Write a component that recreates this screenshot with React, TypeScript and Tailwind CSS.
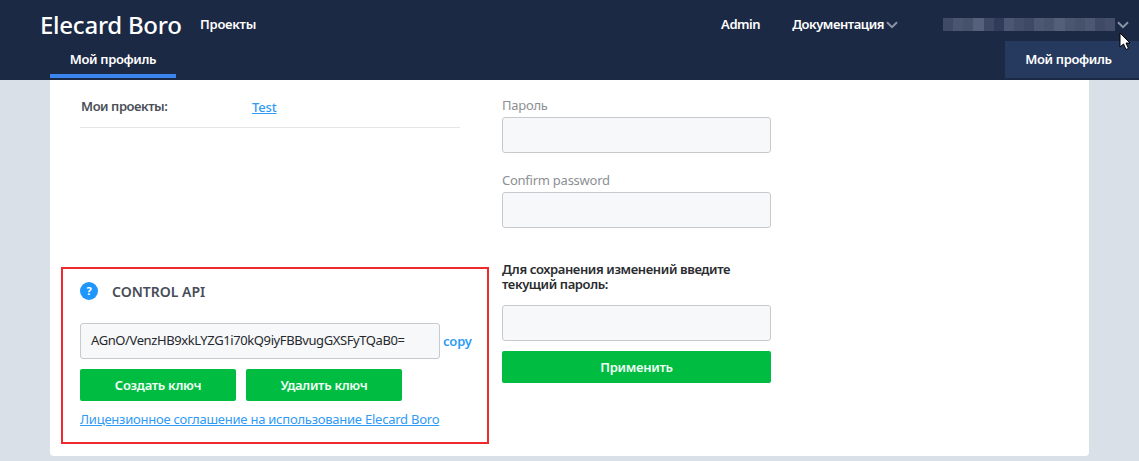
import React from "react";

const blur = ["#3f4a66","#4a5570","#46516c","#55607a","#3d4864","#2f3b59","#4b5672","#434e6a","#3e4965","#4c5772","#48536e","#535e78","#4a5570","#46516c","#4c5772","#3f4a66","#454f6b"];

function Chevron({ className }: { className: string }) {
  return (
    <svg viewBox="0 0 12 8" className={className} fill="none" stroke="currentColor" strokeWidth="2">
      <path d="M1 1.2 L6 6.2 L11 1.2" />
    </svg>
  );
}

function Field({ label, mt }: { label: string; mt: string }) {
  return (
    <div className={mt}>
      <div className="h-[22px] text-[13px] leading-[20px] tracking-[-0.25px] text-[#8c8f94]">{label}</div>
      <div className="h-[36px] w-[269px] rounded-[3px] border border-[#c8c9cc] bg-[#f7f8fa]" />
    </div>
  );
}

function GreenButton({ label, w }: { label: string; w: string }) {
  return (
    <div className={`${w} flex h-[32px] items-center justify-center rounded-[2px] bg-[#00bd41] pt-[1px] text-[13px] font-semibold tracking-[-0.3px] text-[#f2fff6]`}>
      {label}
    </div>
  );
}

export default function App() {
  return (
    <div className="relative h-[461px] w-[1139px] overflow-hidden bg-[#d9e0e8] font-['Noto_Sans',sans-serif]">
      <header className="h-[80px] bg-[#1c2945] text-white">
        <div className="flex h-[49px] items-center pl-[40px] pr-[10px]">
          <div className="w-[160px] text-[24px] font-medium leading-[32px] tracking-[-0.25px]">Elecard Boro</div>
          <div className="text-[13px] font-semibold tracking-[-0.25px]">Проекты</div>
          <div className="ml-auto flex items-center text-[13px] font-semibold tracking-[-0.45px]">
            <span>Admin</span>
            <span className="ml-[32px]">Документация</span>
            <Chevron className="ml-[2px] h-[8px] w-[12px] text-[#8a93a8]" />
            <div className="ml-[45px] flex h-[13px] w-[172px]">
              {blur.map((c, i) => (
                <div key={i} className="h-full flex-1" style={{ backgroundColor: c }} />
              ))}
            </div>
            <Chevron className="ml-[2px] h-[8px] w-[12px] text-[#8a93a8]" />
          </div>
        </div>
        <div className="ml-[50px] flex h-[29px] w-[126px] items-start justify-center border-b-4 border-[#3b86ee] pt-[1px] text-[13px] font-semibold tracking-[-0.35px]">
          Мой профиль
        </div>
      </header>

      <div className="absolute left-[1005px] top-[41px] flex h-[37px] w-[134px] items-center justify-center bg-[#263a60] pr-[7px] text-[13px] font-semibold tracking-[-0.35px] text-white">
        Мой профиль
      </div>
      <svg className="absolute left-[1119px] top-[32px]" width="12" height="19" viewBox="0 0 12 19">
        <path d="M1 1 L1 15 L4.5 12 L7 17.5 L9.5 16.4 L7 11 L11 11 Z" fill="#fff" stroke="#000" strokeWidth="1" />
      </svg>

      <main className="mx-[50px] flex h-[376px] rounded-b-[4px] bg-white">
        <div className="w-[452px] shrink-0">
          <div className="ml-[30px] flex h-[48px] w-[380px] border-b border-[#e4e5e7] pt-[17px]">
            <div className="w-[172px] pl-[1px] text-[13px] font-semibold leading-[18px] tracking-[-0.45px] text-[#4b4f58]">Мои проекты:</div>
            <a className="text-[13px] font-medium leading-[20px] tracking-[-0.15px] text-[#2f9bf5] underline">Test</a>
          </div>
          <section className="ml-[11px] mt-[139px] h-[177px] w-[428px] border-2 border-[#ee2a2e] pl-[17px] pt-[10px]">
            <div className="flex h-[24px] items-center">
              <div className="flex h-[18px] w-[18px] items-center justify-center rounded-full bg-[#1e96fb] text-[11px] font-bold text-white">?</div>
              <div className="ml-[14px] text-[14px] font-semibold text-[#474c59]">CONTROL API</div>
            </div>
            <div className="mt-[20px] flex items-center">
              <div className="flex h-[36px] w-[360px] items-center rounded-[3px] border border-[#c8c9cc] bg-[#f7f8fa] pl-[10px] text-[13px] tracking-[-0.4px] text-[#26282c]">
                AGnO/VenzHB9xkLYZG1i70kQ9iyFBBvugGXSFyTQaB0=
              </div>
              <a className="ml-[3px] text-[13px] font-semibold leading-[16px] tracking-[-0.2px] text-[#2f9bf5]">copy</a>
            </div>
            <div className="mt-[10px] flex gap-[10px]">
              <GreenButton label="Создать ключ" w="w-[156px]" />
              <GreenButton label="Удалить ключ" w="w-[156px]" />
            </div>
            <a className="mt-[9px] block w-[360px] whitespace-nowrap text-[13px] leading-[18px] tracking-[-0.24px] text-[#2f9bf5] underline">
              Лицензионное соглашение на использование Elecard Boro
            </a>
          </section>
        </div>
        <div className="pt-[15px]">
          <Field label="Пароль" mt="mt-0" />
          <Field label="Confirm password" mt="mt-[17px]" />
          <div className="mt-[34px] w-[269px] text-[13px] font-semibold leading-[15px] tracking-[-0.38px] text-[#2a2c30]">
            Для сохранения изменений введите текущий пароль:
          </div>
          <div className="mt-[13px] h-[36px] w-[269px] rounded-[3px] border border-[#c8c9cc] bg-[#f7f8fa]" />
          <div className="mt-[10px]">
            <GreenButton label="Применить" w="w-[269px]" />
          </div>
        </div>
      </main>
    </div>
  );
}
